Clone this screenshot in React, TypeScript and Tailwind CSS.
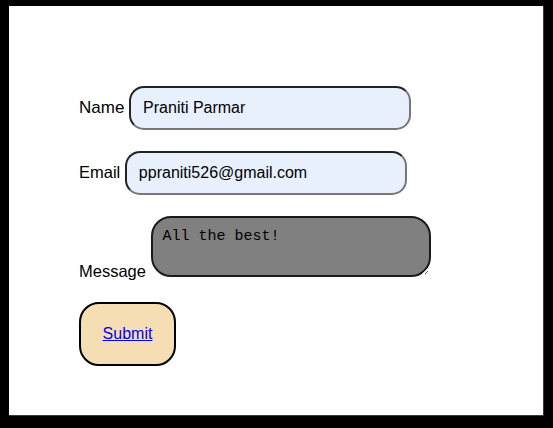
import { useState } from "react";

export default function App() {
  const [name, setName] = useState("Praniti Parmar");
  const [email, setEmail] = useState("ppraniti526@gmail.com");
  const [message, setMessage] = useState("All the best!");

  const inputClass =
    "w-[282px] h-[44px] px-[12px] rounded-[15px] border-2 [border-style:solid] border-t-[#222] border-l-[#222] border-b-[#777] border-r-[#777] bg-[#e8f0fe] text-[16px] text-black align-baseline outline-none font-['Liberation_Sans',Arial,sans-serif]";

  return (
    <div className="w-[553px] h-[428px] bg-black pt-[6px] pl-[9px]">
      <div className="w-[535px] h-[410px] bg-white border-r border-b border-[#3a3a3a] pl-[70px] pt-[80px] font-['Liberation_Sans',Arial,sans-serif] text-[16.5px] text-black">
        <form onSubmit={(e) => e.preventDefault()}>
          <div className="mb-[21px] leading-[19px] text-[17px]">
            <label htmlFor="name">Name</label>{" "}
            <input
              id="name"
              type="text"
              value={name}
              onChange={(e) => setName(e.target.value)}
              className={inputClass}
            />
          </div>

          <div className="mb-[21px] leading-[19px]">
            <label htmlFor="email">Email</label>{" "}
            <input
              id="email"
              type="email"
              value={email}
              onChange={(e) => setEmail(e.target.value)}
              className={inputClass}
            />
          </div>

          <div className="mb-[21px] leading-[19px]">
            <label htmlFor="message">Message</label>{" "}
            <textarea
              id="message"
              value={message}
              onChange={(e) => setMessage(e.target.value)}
              className="w-[280px] h-[61px] px-[10px] py-[10px] rounded-[20px] border-2 border-[#1a1a1a] bg-[#808080] text-[15px] leading-[17px] text-black align-baseline outline-none font-['Liberation_Mono','Courier_New',monospace]"
            />
          </div>

          <div>
            <button
              type="submit"
              className="w-[97px] h-[64px] flex items-center justify-center rounded-[20px] border-2 border-black bg-[#f5deb3]"
            >
              <a href="#" className="text-[#0000ee] underline text-[16px]">
                Submit
              </a>
            </button>
          </div>
        </form>
      </div>
    </div>
  );
}
